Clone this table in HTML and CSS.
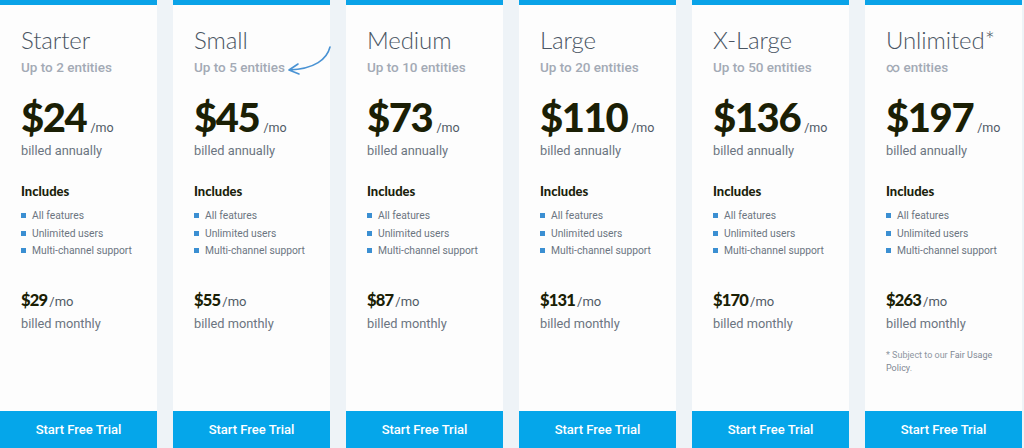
FILE: index.html
```html
<!DOCTYPE html>
<html>
<head>
<meta charset="utf-8">
<link rel="stylesheet" href="styles.css">
</head>
<body>
<div class="plans">
  <div class="card">
    <h2 class="name">Starter</h2>
    <div class="limit">Up to 2 entities</div>
    <div class="price"><span class="amount">$24</span><span class="per">/mo</span></div>
    <div class="billed">billed annually</div>
    <h3 class="inc">Includes</h3>
    <ul class="feats"><li>All features</li><li>Unlimited users</li><li>Multi-channel support</li></ul>
    <div class="mprice"><span class="mamount">$29</span><span class="mper">/mo</span></div>
    <div class="billed">billed monthly</div>
    <div class="spacer"></div>
    <a class="btn">Start Free Trial</a>
  </div>
  <div class="card">
    <h2 class="name">Small</h2>
    <div class="limit">Up to 5 entities</div>
    <svg class="arrow" width="52" height="40" viewBox="0 0 52 40"><path d="M45 2 C42 14 30 24 4 25 M4 25 L13 19 M4 25 L14 29" fill="none" stroke="#4a93d4" stroke-width="1.6" stroke-linecap="round"/></svg>
    <div class="price"><span class="amount">$45</span><span class="per">/mo</span></div>
    <div class="billed">billed annually</div>
    <h3 class="inc">Includes</h3>
    <ul class="feats"><li>All features</li><li>Unlimited users</li><li>Multi-channel support</li></ul>
    <div class="mprice"><span class="mamount">$55</span><span class="mper">/mo</span></div>
    <div class="billed">billed monthly</div>
    <div class="spacer"></div>
    <a class="btn">Start Free Trial</a>
  </div>
  <div class="card">
    <h2 class="name">Medium</h2>
    <div class="limit">Up to 10 entities</div>
    <div class="price"><span class="amount">$73</span><span class="per">/mo</span></div>
    <div class="billed">billed annually</div>
    <h3 class="inc">Includes</h3>
    <ul class="feats"><li>All features</li><li>Unlimited users</li><li>Multi-channel support</li></ul>
    <div class="mprice"><span class="mamount">$87</span><span class="mper">/mo</span></div>
    <div class="billed">billed monthly</div>
    <div class="spacer"></div>
    <a class="btn">Start Free Trial</a>
  </div>
  <div class="card">
    <h2 class="name">Large</h2>
    <div class="limit">Up to 20 entities</div>
    <div class="price"><span class="amount">$110</span><span class="per">/mo</span></div>
    <div class="billed">billed annually</div>
    <h3 class="inc">Includes</h3>
    <ul class="feats"><li>All features</li><li>Unlimited users</li><li>Multi-channel support</li></ul>
    <div class="mprice"><span class="mamount">$131</span><span class="mper">/mo</span></div>
    <div class="billed">billed monthly</div>
    <div class="spacer"></div>
    <a class="btn">Start Free Trial</a>
  </div>
  <div class="card">
    <h2 class="name">X-Large</h2>
    <div class="limit">Up to 50 entities</div>
    <div class="price"><span class="amount">$136</span><span class="per">/mo</span></div>
    <div class="billed">billed annually</div>
    <h3 class="inc">Includes</h3>
    <ul class="feats"><li>All features</li><li>Unlimited users</li><li>Multi-channel support</li></ul>
    <div class="mprice"><span class="mamount">$170</span><span class="mper">/mo</span></div>
    <div class="billed">billed monthly</div>
    <div class="spacer"></div>
    <a class="btn">Start Free Trial</a>
  </div>
  <div class="card">
    <h2 class="name">Unlimited*</h2>
    <div class="limit">∞ entities</div>
    <div class="price"><span class="amount">$197</span><span class="per">/mo</span></div>
    <div class="billed">billed annually</div>
    <h3 class="inc">Includes</h3>
    <ul class="feats"><li>All features</li><li>Unlimited users</li><li>Multi-channel support</li></ul>
    <div class="mprice"><span class="mamount">$263</span><span class="mper">/mo</span></div>
    <div class="billed">billed monthly</div>
    <p class="note">* Subject to our <span class="link">Fair Usage Policy</span>.</p>
    <div class="spacer"></div>
    <a class="btn">Start Free Trial</a>
  </div>
</div>
</body>
</html>
```
FILE: styles.css
```css
* { box-sizing: border-box; }
html, body { margin: 0; padding: 0; }
body {
  width: 1024px;
  height: 448px;
  overflow: hidden;
  background: #eef3f7;
  font-family: Roboto, "Liberation Sans", sans-serif;
}
.plans {
  display: flex;
  gap: 16px;
  height: 448px;
}
.card {
  position: relative;
  width: 157px;
  flex: 0 0 157px;
  height: 448px;
  background: #fdfdfd;
  border-top: 5px solid #0aa3e8;
  padding-left: 21px;
  display: flex;
  flex-direction: column;
}
.name {
  margin: 20px 0 0;
  font-family: Lato, sans-serif;
  font-weight: 300;
  font-size: 24px;
  line-height: 30px;
  color: #4a5563;
  letter-spacing: -0.1px;
}
.limit {
  margin-top: 4px;
  font-size: 13.5px;
  font-weight: 500;
  color: #a3aab5;
  line-height: 16px;
}
.arrow {
  position: absolute;
  left: 112px;
  top: 40px;
}
.price {
  margin-top: 22px;
  height: 40px;
  line-height: 40px;
  white-space: nowrap;
}
.amount {
  font-family: Lato, sans-serif;
  font-weight: 900;
  font-size: 40px;
  color: #1b1f05;
  letter-spacing: -1.4px;
}
.per {
  margin-left: 4px;
  font-size: 12.5px;
  color: #505a66;
}
.billed {
  margin-top: 5px;
  font-size: 12.8px;
  color: #6c7581;
  line-height: 17px;
}
.inc {
  margin: 24px 0 0;
  font-family: Lato, sans-serif;
  font-weight: 900;
  font-size: 13px;
  line-height: 17px;
  color: #1b1f0b;
}
.feats {
  list-style: none;
  margin: 7px 0 0;
  padding: 0;
}
.feats li {
  position: relative;
  padding-left: 11px;
  font-size: 10.3px;
  line-height: 17.5px;
  color: #6c7581;
}
.feats li::before {
  content: "";
  position: absolute;
  left: 0;
  top: 6px;
  width: 5px;
  height: 5px;
  background: #3b8fd2;
}
.mprice {
  margin-top: 30px;
  height: 20px;
  line-height: 20px;
  white-space: nowrap;
}
.mamount {
  font-family: Lato, sans-serif;
  font-weight: 900;
  font-size: 16.5px;
  color: #1b1f05;
  letter-spacing: -0.8px;
}
.mper {
  margin-left: 2px;
  font-size: 13px;
  color: #505a66;
}
.note {
  margin: 17px 0 0;
  font-size: 9px;
  line-height: 13px;
  color: #8e96a1;
  padding-right: 20px;
}
.link { color: #7f8893; }
.spacer { flex: 1; }
.btn {
  display: block;
  margin-left: -21px;
  height: 37px;
  line-height: 37px;
  background: #05a6ea;
  color: #fff;
  text-align: center;
  font-size: 13px;
  font-weight: 500;
}
```
